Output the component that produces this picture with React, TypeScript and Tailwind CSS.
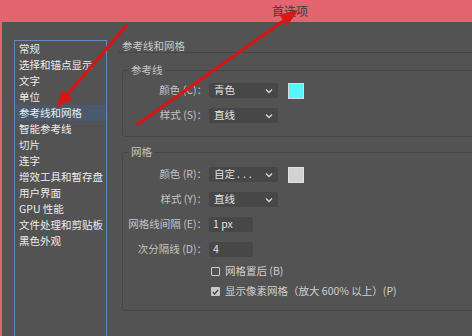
import React from "react";

const font = { fontFamily: '"Noto Sans CJK SC", "Noto Sans", sans-serif' };

const items = [
  "常规",
  "选择和锚点显示",
  "文字",
  "单位",
  "参考线和网格",
  "智能参考线",
  "切片",
  "连字",
  "增效工具和暂存盘",
  "用户界面",
  "GPU 性能",
  "文件处理和剪贴板",
  "黑色外观",
];

function Chevron() {
  return (
    <svg width="8" height="6" viewBox="0 0 8 6" className="shrink-0">
      <path d="M1 1.5 L4 4.5 L7 1.5" fill="none" stroke="#d8d8d8" strokeWidth="1.3" />
    </svg>
  );
}

function Select({ children }: { children: React.ReactNode }) {
  return (
    <div className="w-[69px] h-[15px] bg-[#474747] rounded-[2px] flex items-center justify-between pl-[5px] pr-[5px] text-[#e2e2e2]">
      <span className="leading-none whitespace-nowrap">{children}</span>
      <Chevron />
    </div>
  );
}

function Input({ value }: { value: string }) {
  return (
    <div className="w-[44px] h-[15px] bg-[#474747] rounded-[2px] flex items-center pl-[4px] text-[#e2e2e2]">
      <span className="leading-none">{value}</span>
    </div>
  );
}

function Row({ label, children }: { label: string; children: React.ReactNode }) {
  return (
    <div className="flex items-center h-[15px]">
      <div className="w-[86px] text-right pr-[2px] text-[#c4c4c4] leading-none whitespace-nowrap">{label}</div>
      {children}
    </div>
  );
}

export default function App() {
  return (
    <div className="relative w-[472px] h-[336px] overflow-hidden bg-[#e4656f] flex flex-col text-[10.5px]" style={font}>
      <div className="h-[22px] shrink-0 flex items-center pl-[272px] text-[12px] text-[#3a3a3a]">首选项</div>
      <div className="flex-1 ml-[2px] bg-[#535353] flex pt-[18px] pl-[12px]">
        <div className="w-[93px] h-[320px] shrink-0 border border-[#6289b8]">
          {items.map((t, i) => (
            <div
              key={t}
              className={
                "h-[16px] flex items-center pl-[4px] text-[#ececec] whitespace-nowrap " +
                (i === 4 ? "bg-[#4a5a6e]" : "")
              }
            >
              {t}
            </div>
          ))}
        </div>
        <div className="w-[420px] shrink-0 ml-[11px]">
          <div className="h-[13px] border-b border-[#474747] pl-[4px] leading-[12px] text-[#c8c8c8]">参考线和网格</div>
          <fieldset className="ml-[4px] mt-[10px] border border-[#474747] rounded-[3px] pt-[6px] pb-[13px] flex flex-col gap-[10px]">
            <legend className="ml-[6px] px-[2px] leading-[14px] text-[#c4c4c4]">参考线</legend>
            <Row label="颜色 (C)：">
              <Select>青色</Select>
              <div className="ml-[10px] w-[16px] h-[16px] bg-[#55f6fc] border border-[#d8d8d8]" />
            </Row>
            <Row label="样式 (S)：">
              <Select>直线</Select>
            </Row>
          </fieldset>
          <fieldset className="ml-[4px] mt-[8px] border border-[#474747] rounded-[3px] pt-[8px] pb-[11px] flex flex-col">
            <legend className="ml-[6px] px-[2px] leading-[14px] text-[#c4c4c4]">网格</legend>
            <Row label="颜色 (R)：">
              <Select>
                自定<span className="ml-[2px] tracking-[3px]">...</span>
              </Select>
              <div className="ml-[10px] w-[16px] h-[16px] bg-[#d2d2d2] border border-[#e0e0e0]" />
            </Row>
            <div className="h-[10px]" />
            <Row label="样式 (Y)：">
              <Select>直线</Select>
            </Row>
            <div className="h-[10px]" />
            <Row label="网格线间隔 (E)：">
              <Input value="1 px" />
            </Row>
            <div className="h-[10px]" />
            <Row label="次分隔线 (D)：">
              <Input value="4" />
            </Row>
            <div className="h-[7px]" />
            <div className="flex items-center h-[15px] pl-[88px] text-[#d0d0d0]">
              <div className="w-[9px] h-[9px] border border-[#cfcfcf] rounded-[1px]" />
              <span className="ml-[5px] leading-none">网格置后 (B)</span>
            </div>
            <div className="h-[5px]" />
            <div className="flex items-center h-[15px] pl-[88px] text-[#d0d0d0]">
              <div className="w-[9px] h-[9px] bg-[#c8c8c8] rounded-[1px] flex items-center justify-center">
                <svg width="7" height="6" viewBox="0 0 7 6">
                  <path d="M0.8 3 L2.7 4.9 L6.2 0.9" fill="none" stroke="#444" strokeWidth="1.4" />
                </svg>
              </div>
              <span className="ml-[5px] leading-none whitespace-nowrap">显示像素网格（放大 600% 以上）(P)</span>
            </div>
          </fieldset>
        </div>
      </div>
      <svg className="absolute inset-0 pointer-events-none" width="472" height="336" viewBox="0 0 472 336">
        <line x1="126" y1="26" x2="66" y2="96" stroke="#d81616" strokeWidth="3.2" strokeLinecap="round" />
        <polygon points="56,108 73,98.8 62.4,89.8" fill="#d81616" />
        <line x1="138" y1="124" x2="286" y2="19" stroke="#d81616" strokeWidth="3.2" strokeLinecap="round" />
        <polygon points="298,10 287.4,26.1 279.3,14.7" fill="#d81616" />
      </svg>
    </div>
  );
}
